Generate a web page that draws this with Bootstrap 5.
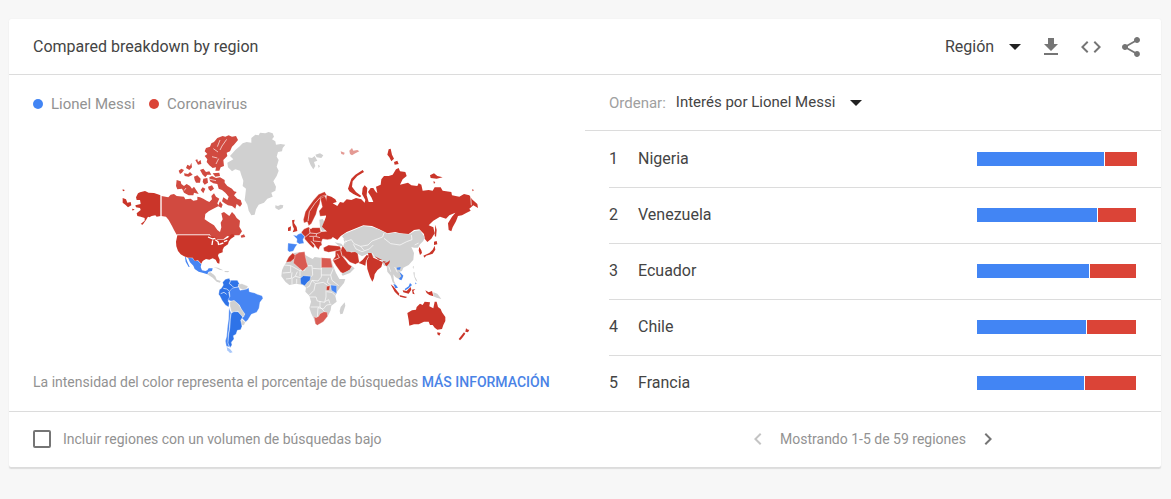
<!DOCTYPE html>
<html lang="es">
<head>
<meta charset="utf-8">
<meta name="viewport" content="width=device-width, initial-scale=1">
<title>Compared breakdown by region</title>
<link href="https://cdn.jsdelivr.net/npm/bootstrap@5.3.0/dist/css/bootstrap.min.css" rel="stylesheet">
<style>
  body { background: #f7f7f7; font-family: Roboto, "Liberation Sans", sans-serif; font-size: 16px; line-height: 24px; color: #444; }
  .page { padding: 19px 10px 32px 9px; }
  .panel { border: 0; border-radius: 2px; box-shadow: 0 2px 1px #dcdcdc, 0 0 1px #e4e4e4; color: #444; }
  .panel-head { height: 56px; padding: 0 18px 0 24px; border-bottom: 1px solid #dcdcdc; }
  .panel-foot { border-top: 1px solid #dcdcdc; font-size: 14px; color: #929292; }
  .foot-cell { height: 55px; padding-bottom: 2px; }
  .pager { gap: 10px; }
  .pick { width: auto; border: 0; margin-right: 2px; padding: 0 26px 0 0; color: #444; background-color: transparent; background-size: 12px 6px; background-position: right 0 center;
    background-image: url("data:image/svg+xml,%3Csvg xmlns='http://www.w3.org/2000/svg' viewBox='0 0 12 6'%3E%3Cpath d='M0 0h12L6 6z' fill='%23212121'/%3E%3C/svg%3E"); }
  .icon-btn { border: 0; padding: 0; background: none; color: #757575; line-height: 0; }
  .icon-btn:disabled { color: #c4c4c4; }
  .icon-btn svg { fill: currentColor; }
  .legend { padding: 17px 0 4px; gap: 8px; font-size: 15px; color: #929292; }
  .dot { width: 10px; height: 10px; border-radius: 50%; }
  .dot + span + .dot { margin-left: 6px; }
  .blue { background: #4285f4; }
  .red { background: #db4437; }
  .sortbar { height: 56px; gap: 10px; border-bottom: 1px solid #dcdcdc; font-size: 15px; }
  .sortbar label { color: #a0a0a0; }
  .sortbar .pick { font-size: 15px; }
  .rank-row { height: 56px; padding: 0 24px 2px 0; border-top: 1px solid #dcdcdc; }
  .rank-row:first-child { border-top-color: transparent; }
  .rank-no { width: 29px; }
  .split { width: 160px; height: 14px; gap: 1px; }
  .note { padding-top: 10px; font-size: 14px; color: #929292; }
  .note a { color: #4a83e6; font-weight: 500; text-decoration: none; }
  .tick { width: 18px; height: 18px; margin: 0; border: 2px solid #757575; border-radius: 2px !important; }
  .world { max-width: 100%; height: auto; }
  .g { fill: #d0d0d0; } .r { fill: #ca3529; } .m { fill: #d14a40; } .p { fill: #d95a52; } .b { fill: #4685f3; } .d { fill: #2e73e8; }
  .world path { stroke: #fff; stroke-width: 1; stroke-linejoin: round; }
  .world .n { stroke: none; }
  .world .l { fill: none; stroke: #fff; stroke-width: 2; }
</style>
</head>
<body>
<main class="page">
<section class="card panel">
  <header class="panel-head d-flex align-items-center justify-content-between">
    <h1 class="fs-6 fw-normal m-0">Compared breakdown by region</h1>
    <div class="d-flex align-items-center gap-3">
      <select class="form-select pick fs-6" aria-label="Nivel"><option>Región</option></select>
      <button class="icon-btn" type="button" aria-label="Descargar"><svg width="24" height="24" viewBox="0 0 24 24"><path d="M19 9h-4V3H9v6H5l7 7 7-7zM5 18v2h14v-2H5z"/></svg></button>
      <button class="icon-btn" type="button" aria-label="Insertar"><svg width="24" height="24" viewBox="0 0 24 24"><path d="M9.4 16.6 4.8 12l4.6-4.6L8 6l-6 6 6 6 1.4-1.4zm5.2 0 4.6-4.6-4.6-4.6L16 6l6 6-6 6-1.4-1.4z"/></svg></button>
      <button class="icon-btn" type="button" aria-label="Compartir"><svg width="24" height="24" viewBox="0 0 24 24"><path d="M18 16.080c-.76 0-1.440.3-1.960.77L8.910 12.700c.05-.23.09-.46.09-.7s-.04-.47-.09-.7l7.050-4.110c.54.5 1.250.81 2.040.81 1.660 0 3-1.340 3-3s-1.340-3-3-3-3 1.340-3 3c0 .24.04.47.09.7L8.040 9.810C7.500 9.310 6.790 9 6 9c-1.660 0-3 1.340-3 3s1.340 3 3 3c.79 0 1.500-.31 2.040-.81l7.120 4.160c-.05.21-.08.43-.08.65 0 1.610 1.310 2.920 2.920 2.920s2.920-1.310 2.920-2.920-1.310-2.920-2.920-2.920z"/></svg></button>
    </div>
  </header>

  <div class="row g-0">
    <div class="col-6 px-4 d-flex flex-column">
      <div class="legend d-flex align-items-center">
        <span class="dot blue"></span><span>Lionel Messi</span>
        <span class="dot red"></span><span>Coronavirus</span>
      </div>
      <svg class="world mx-auto" width="380" height="240" viewBox="-9 0 1140 720" role="img" aria-label="Mapa">
        <!-- North America -->
        <g>
          <path class="r n" d="M78 232 84 220 90 217 105 213 116 218 132 219 152 226V288L140 290 136 286 125 288 118 292 114 290 108 300 98 314 92 312 104 302 104 294 92 290 82 288 80 280 92 270 90 264 78 262 76 256 92 252 90 240 80 240ZM38 234 48 238 52 248 62 246 64 256 54 262 46 254 38 248ZM38 208l6 2-2 4-4-2ZM66 266l8 2-6 4Z"/>
          <path class="m n" d="M154 228 175 232 182 224 192 222 200 228 222 230 226 238 242 236 250 242 262 240 262 230 270 232 280 236 290 242 298 246 306 238 304 228 312 220 318 230 328 236 322 250 326 258 310 266 296 274 286 282 284 298 296 306 312 316 322 330 330 336 334 322 332 308 338 298 334 280 342 276 350 282 358 288 366 276 374 284 380 294 390 302 388 320 396 334 388 346 374 346 366 352 352 348 340 358 320 358 304 352 300 344H200L192 330 186 318 176 300 168 290 154 288Z"/>
          <path class="m n" d="M300 80 304 70 312 66 322 54 338 48 346 50 356 46 366 50 378 48 384 60 372 74 366 80 360 94 350 98 352 108 340 120 342 138 332 142 328 152 316 152 318 142 308 144 298 136 290 126 292 118 284 108 292 102 284 94 288 84ZM200 180 212 184 214 192 222 198 230 192 240 198 246 206 252 200 260 212 266 222 252 218 250 226 236 226 222 218 216 206 202 208 198 198ZM206 152 214 146 222 150 216 158 210 162ZM228 144 232 134 240 138 244 128 246 142 238 150ZM256 120 262 118 264 126 272 120 274 132 264 134ZM222 160 234 162 240 156 248 164 236 170 224 168ZM270 150 280 146 288 156 298 154 304 164 292 164 286 172 278 164ZM308 160 328 158 330 168 316 170ZM252 170 262 166 272 176 270 188 258 188 254 180ZM280 176 292 174 294 188 284 194 278 186ZM294 200 306 196 312 206 302 214 296 208ZM286 206 278 202 272 210 280 220ZM298 172 306 168 318 174 330 172 344 180 344 188 352 198 366 206 372 214 380 216 372 226 382 236 392 240 396 252 390 260 380 252 376 266 366 258 354 256 344 250 336 244 340 232 352 240 356 230 346 218 336 210 326 206 322 192 310 190 300 184ZM330 244 338 254 334 264 324 258Z"/>
          <path class="l" style="stroke-width:3" d="M153 224V290M200 345H300"/>
          <path class="l" d="M300 178 318 182M330 60 322 80M350 58 336 78 330 90M310 86l14 10M306 110l16 4M326 116l-8 16M228 204l-6 8M330 220l20 4"/>
          <path class="g n" d="M352 128 370 118 360 108 376 90 390 78 398 70 410 66 424 68 424 54 436 44 446 46 450 38 466 40 476 36 488 40 492 50 486 58 496 64 498 74 512 72 526 74 518 84 516 94 504 96 500 110 506 120 500 140 506 152 500 168 490 184 498 200 496 212 484 218 488 230 472 236 462 248 446 254 438 268 434 284 424 286 416 272 412 254 404 240 406 224 408 206 398 198 400 182 394 166 390 152 376 148 366 154 354 142ZM496 256 504 258 512 254 520 256 518 264 506 270 496 264ZM594 112 606 114 614 108 622 122 612 126 616 138 610 148 602 136 598 126ZM616 104 630 100 640 106 634 114 620 112ZM624 134l6 4-4 6Z"/>
        </g>
        <!-- USA, Mexico and South America -->
        <g transform="translate(150 345)">
          <path class="r n" d="M52 1H148L156 6 166 5 172 14 184 14 192 14 204 8 214-2 220-2 224 4 212 12 206 20 204 28 192 36 188 44 188 52 176 56 174 62 179 74 178 86 172 84 167 74 158 70 148 74 138 72 128 78 124 86 114 76 104 78 98 68 84 68 72 64 62 58 54 48 49 34 48 20Z"/>
          <path class="l" style="stroke-width:4" d="M144 6 158 12 166 10M158 16 156 30M166 14 174 20 176 30M178 28 190 24M192 20 202 16"/>
          <path class="m n" d="M206-2 218-10 230-16 240-14 232-6 220-4ZM242 2 252-2 256 6 244 8Z"/>
          <path class="b n" d="M84 68 98 70 104 78 114 78 124 88 122 96 126 106 136 108 142 106 146 100 158 100 156 108 146 110 142 118 130 114 116 110 104 102 100 92 90 82ZM75 66 77 66 82 80 89 96 86 96 77 80Z"/>
          <path class="g n" d="M142 118 150 111 160 118 166 124 170 134 182 138 180 143 170 140 158 128ZM160 96 174 98 190 106 180 105 168 99ZM194 108 208 108 204 112 194 111Z"/>
          <path class="d" d="M188 142 196 133 208 130 210 136 220 136 232 136 238 146 234 156 222 158 214 166 206 172 210 190 204 198 208 204 206 216 196 210 186 196 180 184 176 178 178 164 184 160 190 150Z"/>
          <path class="g" d="M235 148 246 146 264 154 260 162 248 164 238 160Z"/>
          <path class="b" d="M208 170 216 160 224 158 236 156 240 166 250 164 260 162 266 158 268 170 284 174 292 178 306 182 309 190 300 202 297 220 290 232 274 238 264 254 257 261 246 250 254 238 244 224 238 210 224 200 212 198 204 194 210 184Z"/>
          <path class="g" d="M210 200 222 196 236 208 244 222 254 236 251 246 242 242 234 228 220 232 214 230 210 214ZM244 252 256 262 252 271 243 270Z"/>
          <path class="b" d="M207 218 213 234 210 252 208 280 205 300 204 322 208 336 199 334 196 318 200 304 202 280 206 250Z"/>
          <path class="d" d="M214 234 222 230 234 230 248 246 242 256 246 274 242 284 232 286 228 298 220 302 222 312 214 322 216 330 210 338 204 324 206 300 210 276 211 252Z"/>
          <path class="n" fill="#a9c8fa" d="M200 336 210 342 218 352 210 354 202 346Z"/>
          <path class="l" d="M190 160 200 162 208 168M212 136 208 146 216 152 222 158M182 176 192 172 200 178"/>
        </g>
        <!-- Africa and Europe -->
        <g transform="translate(480 315)">
          <path class="g n" d="M50 110 60 92 72 84 88 82 104 80 106 90 116 96 128 102 134 96 150 98 168 100 182 100 190 124 198 144 208 162 226 162 222 174 210 188 200 202 196 214 200 230 184 242 182 256 174 272 160 288 142 300 136 296 132 282 124 266 118 248 123 230 118 212 106 200 108 188 100 180 78 176 58 180 46 170 34 154 36 136 42 122ZM212 246 224 232 226 242 218 266 211 268 209 258Z"/>
          <path class="l" d="M42 120 62 122 62 142 38 144M62 122 88 136 104 136 108 124M66 142 64 160 48 162M82 140 76 154 66 160 66 178M76 154 92 158M90 136V154M112 122 126 122 128 150 122 156M128 130 154 132 154 98M154 130V156L144 168 126 166M154 150 182 150 190 130M182 150 186 166 206 182M176 158 172 172 184 182M126 166 118 184 110 188M126 166 136 176 132 196 118 210M136 176 160 172 172 180M118 216 138 216 142 228 164 232 168 216 168 196M122 246 150 246 150 228M142 278 144 248 160 252 170 240 184 238M164 230 176 224 180 236M170 200 186 202 196 212M150 246 166 262M80 162V176"/>
          <path class="p" d="M74 90 88 82 104 80 106 94 110 112 114 124 98 138 88 130 70 114 72 102ZM132 274 138 278 146 274 150 266 162 260 172 262 173 274 160 290 142 301 136 296ZM154 98 182 100 188 128H154Z"/>
          <path class="r" d="M48 112 56 96 68 84 75 90 74 100 62 110ZM170 184 180 182 178 196H169Z"/>
          <path class="d" d="M91 160 100 152 122 154 120 166 112 172 104 182 92 176Z"/>
          <path class="b" d="M182 180 200 182 200 206 184 196ZM54 54 68 56 82 58 76 66 70 78 58 81 53 76ZM69 30 80 32 84 28 94 24 104 34 99 44 102 55 88 57 80 52 81 42Z"/>
          <path class="r n" d="M54 8 63 4 62 17 54 18ZM66-14 74-16 72-6 80 6 82 18 68 22 72 12 68 2Z"/>
          <path class="r" d="M94 22 102 12 116 6 122 12 128 8 150 8 152 20 178 18 194 30 184 42 172 44 158 42 154 52 156 60 150 64 146 74 138 66 132 56 122 48 134 62 130 70 118 58 104 42 104 34 98 28ZM160 68 176 60 196 62 210 64 214 74 196 78 176 82 162 78ZM196 78 212 74 218 62 226 72 244 82 262 78 268 112 256 118 240 112 226 98 220 92 226 104 236 118 246 124 240 134 222 146 212 142 198 122 188 106 196 94Z"/>
          <path class="l" d="M118 10 120 24 106 36M120 24 140 26 152 22M118 34 136 34 150 38M130 36 130 48 152 50M140 26 138 34M212 76 216 92 226 104M190 106 208 98 202 86"/>
          <path class="g n" d="M148-16 158-18 164-8 172-2 172 14 156 18 150 6ZM214 146 240 134 246 124 254 130 240 144 218 152ZM194 52 214 56 220 64 206 62Z"/>
          <path class="r" d="M100-16 106-40 118-58 130-74 146-92 164-100 170-90 160-84 152-80 149-64 142-48 138-32 130-16 124-4 116 2 112-10 102-6ZM150-84 164-90 172-68 180-42 168-28 150-26 147-42 157-54Z"/>
          <path class="l" d="M114-12 118-40 134-64 150-82"/>
        </g>
        <!-- Russia -->
        <g transform="translate(690 0)">
          <path class="r n" d="M-40 226-26 230-14 238-10 246-22 250-8 258 0 246 10 248 20 238 34 240 48 234 64 238 74 248 76 240 66 222 68 204 74 196 82 204 80 226 86 246 100 246 94 232 84 216 92 204 100 204 106 214 112 220 108 200 122 194 124 178 132 168 146 168 158 164 168 148 176 144 180 154 196 156 200 168 188 178 180 194 204 188 214 196 232 198 236 190 244 194 248 212 266 210 278 212 284 202 302 202 308 212 334 216 336 226 358 230 372 222 388 226 396 238 412 252 414 264 400 256 388 266 392 272 380 278 366 286 354 288 348 304 338 322 334 334 326 330 324 310 336 290 346 278 328 286 318 296 300 290 280 302 266 316 280 322 284 340 274 356 262 366 254 356 252 342 238 328 222 330 206 342 180 340 166 336 142 340 118 328 96 318 70 316 44 326 20 336 2 348-8 360-30 346-40 334-54 320-48 306-42 290-42 270-42 250ZM24 206 34 176 46 164 68 150 72 156 52 168 38 184 36 200 48 216 64 228 60 232 40 222 28 214ZM146 88 152 86 156 104 162 116 154 124 148 112 142 104ZM162 126 172 122 176 132 164 134ZM270 166 282 160 292 168 308 172 290 176 272 174ZM280 184l6 2-4 6ZM396 208l6 2-4 4ZM286 314 290 330 288 352 284 346Z"/>
          <path class="l" d="M392 230 394 256"/>
          <path class="n" fill="#e49a94" d="M2 94 14 98 12 104 4 102ZM28 92 36 84 40 92 52 90 58 94 46 100 36 106 30 102Z"/>
        </g>
        <!-- Asia and Oceania -->
        <g transform="translate(690 315)">
          <path class="g n" d="M6 34 14 26 44 14 70 3 96 6 118 14 142 26 166 23 190 27 208 28 224 18 240 16 254 36 250 48 240 58 234 68 222 68 214 66 222 84 220 104 206 120 190 128 186 138 178 140 190 152 186 164 176 162 166 156 160 148 162 168 168 180 158 172 152 152 142 140 140 124 132 122 122 104 100 96 88 84 66 94 44 80 20 80 10 62 14 52 22 50 14 44ZM18 46l-8-4 6 14Z"/>
          <path class="l" d="M14 50 34 44 42 56 62 64 84 60 96 48 128 36 132 24M132 40 152 56 180 60 200 50 216 44 214 30M40 58 48 72 66 80 88 72 100 60M96 84 106 100 130 108M146 124 152 140M164 126 172 142M62 64 72 76M224 60 236 54"/>
          <path class="r n" d="M80 108 86 96 84 84 94 84 100 98 114 104 128 112 124 126 112 136 104 148 102 160 97 170 90 156 82 132ZM56 114 68 104 80 90 86 92 78 108 76 122 66 118ZM134 114 142 112 150 106 148 114 140 124 136 120ZM128 108l10 2-6 4ZM104 94 128 106 116 104Z"/>
          <path class="r n" d="M282 50 290 48 292 58 282 60ZM284 62 286 74 278 86 266 90 258 92 254 98 250 92 268 84 278 74ZM238 66 244 76 246 84 240 90 236 76ZM152 178 160 184 178 206 176 212 164 200ZM178 210 202 216 196 219 180 215ZM188 196 200 198 212 186 214 194 206 206 190 202ZM216 194 226 192 220 198 224 208 218 206ZM256 196 266 202 276 198 280 214 268 210 260 204Z"/>
          <path class="b n" d="M170 128 182 126 180 134 172 134ZM178 140 190 152 184 166 176 162 184 154ZM160 176 168 180 174 188 166 190ZM194 192 206 184 210 174 216 180 206 190 196 196ZM226 172l4 4-4 2Z"/>
          <path class="g n" d="M280 202 292 206 304 222 290 218 280 214ZM220 142 224 142 224 154 230 164 232 170 227 166 222 154ZM218 126l4-4-2 10Z"/>
          <path class="r n" d="M202 264 216 256 228 254 230 246 240 236 248 240 254 230 270 232 268 244 280 250 284 230 290 230 294 246 302 252 306 262 316 276 316 288 310 300 306 312 292 314 284 308 278 300 270 300 266 290 252 290 236 298 222 298 208 302 206 286ZM292 322 302 324 298 332 292 328ZM378 310 384 314 388 314 384 322 376 320ZM372 322 376 326 366 340 360 346 356 342Z"/>
        </g>
      </svg>
      <div class="note">La intensidad del color representa el porcentaje de búsquedas <a href="#">MÁS INFORMACIÓN</a></div>
    </div>

    <div class="col-6">
      <div class="sortbar d-flex align-items-center ps-4">
        <label for="sort">Ordenar:</label>
        <select id="sort" class="form-select pick"><option>Interés por Lionel Messi</option></select>
      </div>
      <ol class="list-unstyled m-0 ms-4">
        <li class="rank-row d-flex align-items-center"><span class="rank-no">1</span><span class="flex-grow-1">Nigeria</span><span class="split d-flex"><span class="blue" style="width:127px"></span><span class="red" style="width:32px"></span></span></li>
        <li class="rank-row d-flex align-items-center"><span class="rank-no">2</span><span class="flex-grow-1">Venezuela</span><span class="split d-flex"><span class="blue" style="width:120px"></span><span class="red" style="width:38px"></span></span></li>
        <li class="rank-row d-flex align-items-center"><span class="rank-no">3</span><span class="flex-grow-1">Ecuador</span><span class="split d-flex"><span class="blue" style="width:112px"></span><span class="red" style="width:46px"></span></span></li>
        <li class="rank-row d-flex align-items-center"><span class="rank-no">4</span><span class="flex-grow-1">Chile</span><span class="split d-flex"><span class="blue" style="width:109px"></span><span class="red" style="width:49px"></span></span></li>
        <li class="rank-row d-flex align-items-center"><span class="rank-no">5</span><span class="flex-grow-1">Francia</span><span class="split d-flex"><span class="blue" style="width:107px"></span><span class="red" style="width:51px"></span></span></li>
      </ol>
    </div>
  </div>

  <footer class="panel-foot row g-0">
    <div class="col-6 foot-cell d-flex align-items-center ps-4">
      <input class="form-check-input tick" type="checkbox" id="low">
      <label for="low" class="ps-2 ms-1">Incluir regiones con un volumen de búsquedas bajo</label>
    </div>
    <nav class="col-6 foot-cell pager d-flex align-items-center justify-content-center" aria-label="Páginas">
      <button class="icon-btn" type="button" disabled aria-label="Anterior"><svg width="24" height="24" viewBox="0 0 24 24"><path d="M15.410 7.410 14 6l-6 6 6 6 1.410-1.410L10.830 12z"/></svg></button>
      <span>Mostrando 1-5 de 59 regiones</span>
      <button class="icon-btn" type="button" aria-label="Siguiente"><svg width="24" height="24" viewBox="0 0 24 24"><path d="M10 6 8.590 7.410 13.170 12l-4.580 4.590L10 18l6-6z"/></svg></button>
    </nav>
  </footer>
</section>
</main>
<script src="https://cdn.jsdelivr.net/npm/bootstrap@5.3.0/dist/js/bootstrap.bundle.min.js"></script>
</body>
</html>
